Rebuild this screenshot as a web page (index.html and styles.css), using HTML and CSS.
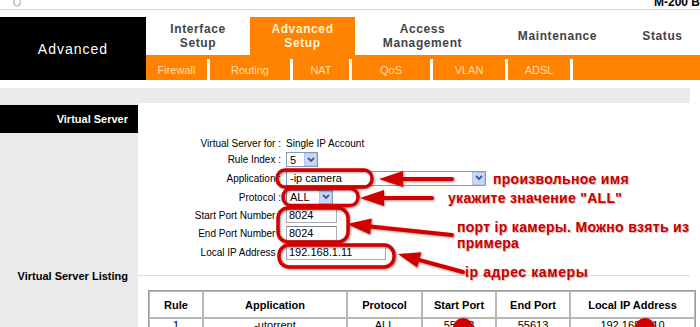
FILE: index.html
```html
<!DOCTYPE html>
<html lang="ru">
<head>
  <meta charset="UTF-8">
  <meta name="viewport" content="width=device-width, initial-scale=1.0">
  <title>Advanced Setup - NAT - Virtual Server</title>
  <link rel="stylesheet" href="styles.css">
</head>
<body>
<div class="page">
  <div class="topbar">
    <svg class="logo" width="10" height="7" viewBox="0 0 10 7"><path d="M2 0 V3 A3 3 0 0 0 8 3 V0" fill="none" stroke="#b0b0b0" stroke-width="1.2"/></svg>
    <span class="model">M-200 B</span>
  </div>

  <div class="header">
    <div class="brand">Advanced</div>
    <div class="nav">
      <div class="tabs">
        <div class="tab w104">Interface<br>Setup</div>
        <div class="tab w105 active">Advanced<br>Setup</div>
        <div class="tab w135">Access<br>Management</div>
        <div class="tab w135">Maintenance</div>
        <div class="tab w75">Status</div>
      </div>
      <div class="subnav">
        <div class="sub w64">Firewall</div>
        <div class="sub w83">Routing</div>
        <div class="sub w59">NAT</div>
        <div class="sub w81">QoS</div>
        <div class="sub w75">VLAN</div>
        <div class="sub w65">ADSL</div>
      </div>
    </div>
  </div>

  <div class="graybar"></div>

  <div class="section form-section">
    <div class="side">
      <div class="side-title">Virtual Server</div>
    </div>
    <div class="body">
      <div class="form">
        <div class="label">Virtual Server for :</div>
        <div class="value">Single IP Account</div>

        <div class="label">Rule Index :</div>
        <div class="value">
          <div class="select w32"><span class="sel-text">5</span><span class="arrow"><svg width="8" height="6" viewBox="0 0 8 6"><path d="M1 1 L4 4 L7 1" fill="none" stroke="#3c5a8c" stroke-width="1.8"/></svg></span></div>
        </div>

        <div class="label">Application :</div>
        <div class="value">
          <div class="select w200"><span class="sel-text">-ip camera</span><span class="arrow"><svg width="8" height="6" viewBox="0 0 8 6"><path d="M1 1 L4 4 L7 1" fill="none" stroke="#3c5a8c" stroke-width="1.8"/></svg></span></div>
        </div>

        <div class="label">Protocol :</div>
        <div class="value">
          <div class="select w47"><span class="sel-text">ALL</span><span class="arrow"><svg width="8" height="6" viewBox="0 0 8 6"><path d="M1 1 L4 4 L7 1" fill="none" stroke="#3c5a8c" stroke-width="1.8"/></svg></span></div>
        </div>

        <div class="label">Start Port Number :</div>
        <div class="value"><input class="field w51" type="text" value="8024" readonly></div>

        <div class="label">End Port Number :</div>
        <div class="value"><input class="field w51" type="text" value="8024" readonly></div>

        <div class="label">Local IP Address :</div>
        <div class="value"><input class="field w100" type="text" value="192.168.1.11" readonly></div>
      </div>
    </div>
  </div>

  <div class="section listing-section">
    <div class="side">
      <div class="side-label">Virtual Server Listing</div>
    </div>
    <div class="body">
      <table class="listing">
        <tr>
          <th class="c1">Rule</th>
          <th class="c2">Application</th>
          <th class="c3">Protocol</th>
          <th class="c4">Start Port</th>
          <th class="c5">End Port</th>
          <th class="c6">Local IP Address</th>
        </tr>
        <tr>
          <td>1</td>
          <td>-utorrent</td>
          <td>ALL</td>
          <td>55613</td>
          <td>55613</td>
          <td>192.168.1.10</td>
        </tr>
      </table>
    </div>
  </div>

  <!-- пометки поверх скриншота -->
  <svg class="marks" width="700" height="327" viewBox="0 0 700 327">
    <g fill="none" stroke="#d10000" stroke-width="3.4">
      <rect x="277" y="170" width="95" height="17" rx="8"/>
      <rect x="283" y="188.5" width="75" height="17" rx="8"/>
      <rect x="278" y="208" width="70" height="34" rx="10"/>
      <rect x="279" y="245" width="115" height="22" rx="10"/>
    </g>
    <g stroke="#d10000" stroke-width="4" stroke-linecap="round">
      <line x1="400" y1="179" x2="452" y2="179"/>
      <line x1="381" y1="198" x2="432" y2="198"/>
      <line x1="368" y1="226.2" x2="452" y2="235"/>
      <line x1="417" y1="259.4" x2="463" y2="272"/>
    </g>
    <g fill="#d10000">
      <polygon points="379,179 403,171 403,187"/>
      <polygon points="360,198 384,190 384,206"/>
      <polygon points="347,224 371.7,218.5 370.1,234.5"/>
      <polygon points="398,254 421.3,252.2 417.1,267.6"/>
      <circle cx="463" cy="328" r="10"/>
      <circle cx="645" cy="328" r="10"/>
    </g>
  </svg>
  <div class="note n1">произвольное имя</div>
  <div class="note n2">укажите значение "ALL"</div>
  <div class="note n3">порт ip камеры. Можно взять из<br>примера</div>
  <div class="note n4">ip адрес камеры</div>
</div>
</body>
</html>
```

FILE: styles.css
```css
body {
  margin: 0;
  padding: 0;
  background: #fff;
  font-family: 'Liberation Sans', Arial, sans-serif;
  font-size: 11px;
  color: #000;
}
.page {
  position: relative;
  width: 700px;
  height: 327px;
  overflow: hidden;
}

/* top strip */
.topbar {
  display: flex;
  justify-content: space-between;
  align-items: flex-start;
  height: 9px;
  border-bottom: 1px solid #d6d6d6;
  margin-bottom: 7px;
}
.logo {
  margin-left: 12px;
}
.model {
  font-weight: bold;
  font-size: 12px;
  line-height: 10px;
  margin-top: -3px;
}

/* header */
.header {
  display: flex;
  height: 63px;
}
.brand {
  width: 146px;
  background: #000;
  color: #fff;
  font-size: 14px;
  letter-spacing: 1px;
  display: flex;
  align-items: center;
  justify-content: center;
}
.nav {
  flex: 1;
  display: flex;
  flex-direction: column;
}
.tabs {
  display: flex;
  height: 38px;
}
.tab {
  display: flex;
  align-items: center;
  justify-content: center;
  text-align: center;
  font-weight: bold;
  font-size: 12px;
  line-height: 14px;
  letter-spacing: 0.6px;
  color: #444;
}
.tab.active {
  background: #ff8300;
  color: #fff2d8;
}
.w104 { width: 104px; }
.w105 { width: 105px; }
.w135 { width: 135px; }
.w75 { width: 75px; }

.subnav {
  display: flex;
  height: 25px;
  box-sizing: border-box;
  padding-top: 4px;
  background: #ff8300;
}
.sub {
  box-sizing: border-box;
  border-right: 3px solid #fff;
  display: flex;
  align-items: center;
  justify-content: center;
  color: #ffdcae;
  font-size: 11px;
}
.w64 { width: 64px; }
.w83 { width: 83px; }
.w59 { width: 59px; }
.w81 { width: 81px; }
.w65 { width: 65px; }

.graybar {
  width: 690px;
  height: 15px;
  margin-top: 8px;
  background: #ebebeb;
}

/* sections */
.section {
  display: flex;
}
.side {
  width: 138px;
  background: #ebebeb;
  flex-shrink: 0;
}
.body {
  width: 552px;
}
.form-section {
  height: 165px;
}
.side-title {
  margin-top: 2px;
  height: 28px;
  line-height: 28px;
  background: #000;
  color: #fff;
  font-weight: bold;
  text-align: right;
  padding-right: 10px;
}
.form {
  display: grid;
  grid-template-columns: 143px auto;
  grid-template-rows: 16px 17px 20px 18px 18px 18px 20px;
  column-gap: 5px;
  align-items: center;
  padding-top: 32px;
  font-size: 10px;
}
.label {
  text-align: right;
  white-space: nowrap;
}
.value {
  display: flex;
  align-items: center;
}
.select {
  display: flex;
  align-items: center;
  box-sizing: border-box;
  height: 15px;
  border: 1px solid #7f9db9;
  background: #fff;
}
.sel-text {
  padding-left: 3px;
  font-size: 11px;
}
.arrow {
  margin-left: auto;
  width: 13px;
  height: 13px;
  box-sizing: border-box;
  border: 1px solid #b4c6f0;
  background: #c8d7fb;
  display: flex;
  align-items: center;
  justify-content: center;
}
.w32 { width: 32px; }
.w47 { width: 47px; }
.w200 { width: 200px; }
.w51 { width: 51px; }
.w100 { width: 100px; }
.field {
  box-sizing: border-box;
  height: 15px;
  padding: 0 2px;
  margin: 0;
  border: 1px solid #a8adb5;
  border-top-color: #7c828c;
  font-family: inherit;
  font-size: 11px;
  color: #000;
  outline: none;
}

/* listing */
.side-label {
  font-weight: bold;
  text-align: right;
  padding-right: 10px;
  line-height: 16px;
}
.listing-section .body {
  margin-top: 7px;
  border-top: 1px solid #dedede;
  padding: 14px 0 0 10px;
  box-sizing: border-box;
}
.listing {
  width: 534px;
  border-collapse: separate;
  border-spacing: 0;
  border: 1px solid #9c9c9c;
  table-layout: fixed;
}
.listing th, .listing td {
  border: 1px solid #b8b8b8;
  text-align: center;
  font-size: 11px;
  padding: 0;
}
.listing th {
  height: 25px;
  font-weight: bold;
}
.listing td {
  height: 16px;
  line-height: 12px;
  vertical-align: top;
}
.c1 { width: 52px; }
.c2 { width: 142px; }
.c3 { width: 73px; }
.c4 { width: 72px; }
.c5 { width: 72px; }
.c6 { width: 123px; }

/* annotations */
.marks {
  position: absolute;
  top: 0;
  left: 0;
  pointer-events: none;
  filter: drop-shadow(1px 1px 1px rgba(60, 0, 0, 0.45));
}
.note {
  position: absolute;
  color: #c80000;
  font-weight: bold;
  font-size: 14px;
  line-height: 16px;
  letter-spacing: 0.3px;
  white-space: nowrap;
  text-shadow: 1px 1px 1px rgba(90, 0, 0, 0.3);
}
.n1 { left: 493px; top: 171px; }
.n2 { left: 448px; top: 190px; }
.n3 { left: 457px; top: 219px; }
.n4 { left: 465px; top: 264px; letter-spacing: 0.6px; }
```
